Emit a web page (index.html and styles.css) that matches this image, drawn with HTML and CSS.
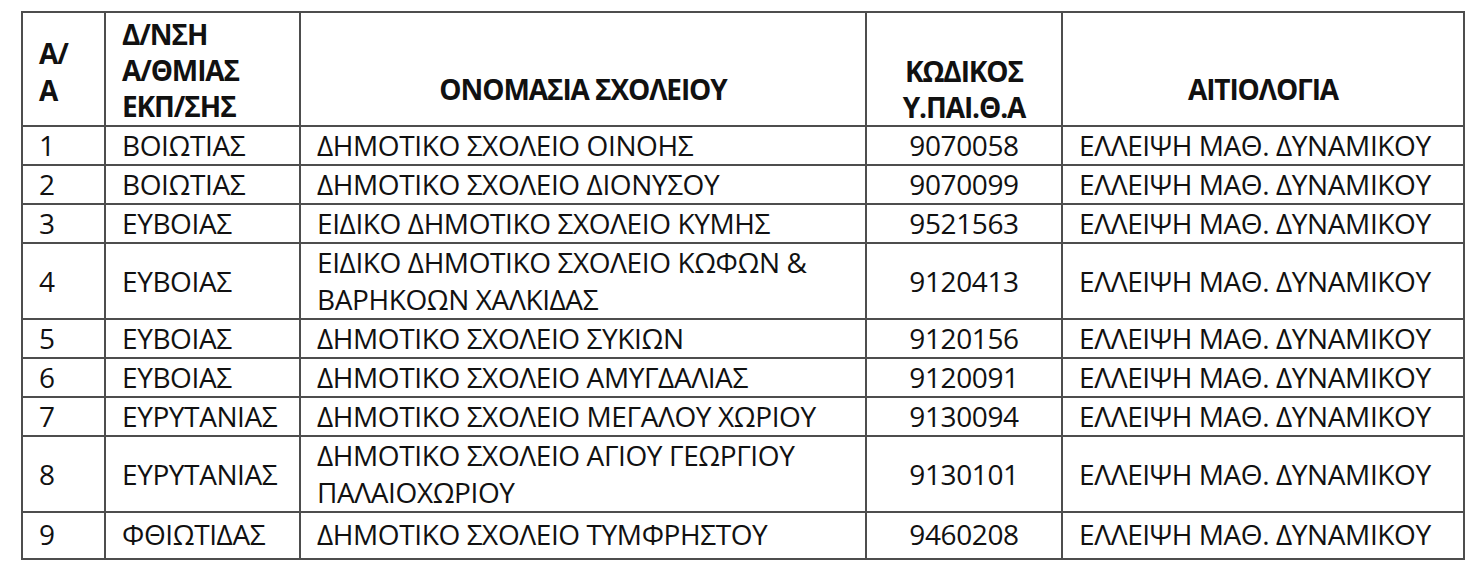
FILE: index.html
```html
<!DOCTYPE html>
<html lang="el">
<head>
<meta charset="utf-8">
<link rel="stylesheet" href="styles.css">
</head>
<body>
<table class="list">
  <colgroup>
    <col class="c-aa">
    <col class="c-dnsh">
    <col class="c-name">
    <col class="c-code">
    <col class="c-reason">
  </colgroup>
  <thead>
    <tr>
      <th class="h-aa">Α/<br>Α</th>
      <th class="h-dnsh">Δ/ΝΣΗ<br>Α/ΘΜΙΑΣ<br>ΕΚΠ/ΣΗΣ</th>
      <th class="h-center">ΟΝΟΜΑΣΙΑ ΣΧΟΛΕΙΟΥ</th>
      <th class="h-center">ΚΩΔΙΚΟΣ<br>Υ.ΠΑΙ.Θ.Α</th>
      <th class="h-center">ΑΙΤΙΟΛΟΓΙΑ</th>
    </tr>
  </thead>
  <tbody>
    <tr><td>1</td><td>ΒΟΙΩΤΙΑΣ</td><td>ΔΗΜΟΤΙΚΟ ΣΧΟΛΕΙΟ ΟΙΝΟΗΣ</td><td class="code">9070058</td><td>ΕΛΛΕΙΨΗ ΜΑΘ. ΔΥΝΑΜΙΚΟΥ</td></tr>
    <tr><td>2</td><td>ΒΟΙΩΤΙΑΣ</td><td>ΔΗΜΟΤΙΚΟ ΣΧΟΛΕΙΟ ΔΙΟΝΥΣΟΥ</td><td class="code">9070099</td><td>ΕΛΛΕΙΨΗ ΜΑΘ. ΔΥΝΑΜΙΚΟΥ</td></tr>
    <tr><td>3</td><td>ΕΥΒΟΙΑΣ</td><td>ΕΙΔΙΚΟ ΔΗΜΟΤΙΚΟ ΣΧΟΛΕΙΟ ΚΥΜΗΣ</td><td class="code">9521563</td><td>ΕΛΛΕΙΨΗ ΜΑΘ. ΔΥΝΑΜΙΚΟΥ</td></tr>
    <tr><td>4</td><td>ΕΥΒΟΙΑΣ</td><td>ΕΙΔΙΚΟ ΔΗΜΟΤΙΚΟ ΣΧΟΛΕΙΟ ΚΩΦΩΝ &amp;<br>ΒΑΡΗΚΟΩΝ ΧΑΛΚΙΔΑΣ</td><td class="code">9120413</td><td>ΕΛΛΕΙΨΗ ΜΑΘ. ΔΥΝΑΜΙΚΟΥ</td></tr>
    <tr><td>5</td><td>ΕΥΒΟΙΑΣ</td><td>ΔΗΜΟΤΙΚΟ ΣΧΟΛΕΙΟ ΣΥΚΙΩΝ</td><td class="code">9120156</td><td>ΕΛΛΕΙΨΗ ΜΑΘ. ΔΥΝΑΜΙΚΟΥ</td></tr>
    <tr><td>6</td><td>ΕΥΒΟΙΑΣ</td><td>ΔΗΜΟΤΙΚΟ ΣΧΟΛΕΙΟ ΑΜΥΓΔΑΛΙΑΣ</td><td class="code">9120091</td><td>ΕΛΛΕΙΨΗ ΜΑΘ. ΔΥΝΑΜΙΚΟΥ</td></tr>
    <tr><td>7</td><td>ΕΥΡΥΤΑΝΙΑΣ</td><td>ΔΗΜΟΤΙΚΟ ΣΧΟΛΕΙΟ ΜΕΓΑΛΟΥ ΧΩΡΙΟΥ</td><td class="code">9130094</td><td>ΕΛΛΕΙΨΗ ΜΑΘ. ΔΥΝΑΜΙΚΟΥ</td></tr>
    <tr><td>8</td><td>ΕΥΡΥΤΑΝΙΑΣ</td><td>ΔΗΜΟΤΙΚΟ ΣΧΟΛΕΙΟ ΑΓΙΟΥ ΓΕΩΡΓΙΟΥ<br>ΠΑΛΑΙΟΧΩΡΙΟΥ</td><td class="code">9130101</td><td>ΕΛΛΕΙΨΗ ΜΑΘ. ΔΥΝΑΜΙΚΟΥ</td></tr>
    <tr class="last"><td>9</td><td>ΦΘΙΩΤΙΔΑΣ</td><td>ΔΗΜΟΤΙΚΟ ΣΧΟΛΕΙΟ ΤΥΜΦΡΗΣΤΟΥ</td><td class="code">9460208</td><td>ΕΛΛΕΙΨΗ ΜΑΘ. ΔΥΝΑΜΙΚΟΥ</td></tr>
  </tbody>
</table>
</body>
</html>
```

FILE: styles.css
```css
html, body {
  margin: 0;
  background: #ffffff;
}

body {
  padding: 11px 0 0 21px;
  font-family: "Open Sans", "Noto Sans", sans-serif;
  color: #111111;
}

.list {
  border-collapse: collapse;
  table-layout: fixed;
  width: 1442px;
  font-size: 28px;
  line-height: 37px;
  letter-spacing: -0.4px;
}

.c-aa { width: 83px; }
.c-dnsh { width: 195px; }
.c-name { width: 566px; }
.c-code { width: 196px; }
.c-reason { width: 402px; }

.list th,
.list td {
  border: 2px solid #4d4d4d;
  padding: 0 0 0 16px;
  text-align: left;
  vertical-align: middle;
  white-space: nowrap;
}

.list th {
  font-weight: 700;
  letter-spacing: -1.1px;
}

.list th.h-aa {
  padding-top: 5px;
  height: 107px;
}

.list th.h-dnsh {
  vertical-align: top;
  padding-top: 3px;
  line-height: 36px;
  height: 109px;
}

.list th.h-center {
  text-align: center;
  padding: 40px 0 0 0;
  line-height: 36px;
}

.list td {
  font-weight: 400;
}

.list td.code {
  text-align: center;
  padding: 0;
}

.list tr.last td {
  height: 43px;
  padding-bottom: 2px;
}
```
